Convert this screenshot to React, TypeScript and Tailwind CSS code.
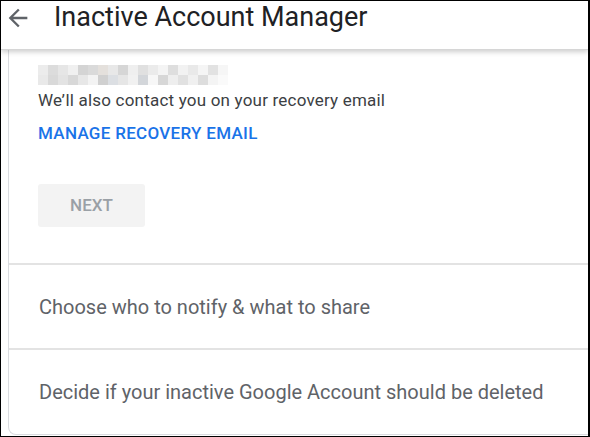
import React from "react";

const row1 = [
  "bg-[#ececec]", "bg-[#dcdcdc]", "bg-[#e6e6e6]", "bg-[#f0f0f0]", "bg-[#d4d4d4]", "bg-[#dadada]",
  "bg-[#e4e0dc]", "bg-[#e8e8e8]", "bg-[#d6d6d6]", "bg-[#efefef]", "bg-[#e0e0e0]", "bg-[#ebebeb]",
  "bg-[#f4f4f4]", "bg-[#dedede]", "bg-[#f2f2f2]", "bg-[#e9e9e9]", "bg-[#f5f5f5]", "bg-[#e2e2e2]", "bg-[#f6f6f6]",
];
const row2 = [
  "bg-[#e9e9e9]", "bg-[#d9d9d9]", "bg-[#e3e3e3]", "bg-[#d8d8d8]", "bg-[#e7e7e7]", "bg-[#f3f3f3]",
  "bg-[#d0d0d0]", "bg-[#dcdfe3]", "bg-[#e6e6e6]", "bg-[#f1f1f1]", "bg-[#d3d6da]", "bg-[#f7f7f7]",
  "bg-[#d7d7d7]", "bg-[#eeeeee]", "bg-[#e1e1e1]", "bg-[#f0f0f0]", "bg-[#dddddd]", "bg-[#f4f4f4]", "bg-[#fafafa]",
];

export default function App() {
  return (
    <div
      className="w-[590px] h-[437px] bg-white border-t border-l border-b border-r-2 border-black flex flex-col overflow-hidden"
      style={{ fontFamily: "Roboto, 'Liberation Sans', sans-serif" }}
    >
      <div className="relative z-10 h-[49px] shrink-0 flex items-center bg-white shadow-[0_2px_5px_rgba(0,0,0,0.2)] border-b border-[#d6d6d6]">
        <svg className="ml-[3px] mb-[14px]" width="28" height="28" viewBox="0 0 24 24">
          <path d="M20 11H7.83l5.59-5.59L12 4l-8 8 8 8 1.41-1.41L7.83 13H20v-2z" fill="#5f6368" />
        </svg>
        <div className="ml-[22px] mb-[15px] text-[27px] text-[#202124] leading-none">Inactive Account Manager</div>
      </div>
      <div className="flex-1 flex flex-col pl-[7px] pb-[1px] bg-white">
        <div className="flex-1 flex flex-col border-l border-b border-[#dadce0] rounded-bl-[8px]">
          <div className="pl-[29px] pt-[15px]">
            <div className="flex flex-col w-[190px]">
              <div className="flex h-[10px]">
                {row1.map((c, i) => (
                  <div key={i} className={`w-[10px] h-[10px] ${c}`} />
                ))}
              </div>
              <div className="flex h-[10px]">
                {row2.map((c, i) => (
                  <div key={i} className={`w-[10px] h-[10px] ${c}`} />
                ))}
              </div>
            </div>
            <div className="mt-[3px] text-[17px] tracking-[0.2px] text-[#3c4043] leading-[24px]">
              We’ll also contact you on your recovery email
            </div>
            <div className="mt-[11px] text-[17px] font-medium text-[#1a73e8] leading-[20px] tracking-[0.3px]">
              MANAGE RECOVERY EMAIL
            </div>
            <div className="mt-[41px] w-[107px] h-[43px] rounded-[3px] bg-[#f3f3f3] flex items-center justify-center text-[17px] font-medium text-[#9aa0a6]">
              NEXT
            </div>
          </div>
          <div className="mt-[36px] border-t-2 border-[#e3e3e3] h-[85px] flex items-center pl-[30px] text-[20px] text-[#5f6368]">
            Choose who to notify &amp; what to share
          </div>
          <div className="border-t-2 border-[#e3e3e3] flex-1 flex items-center pl-[30px] text-[20px] text-[#5f6368]">
            Decide if your inactive Google Account should be deleted
          </div>
        </div>
      </div>
    </div>
  );
}
